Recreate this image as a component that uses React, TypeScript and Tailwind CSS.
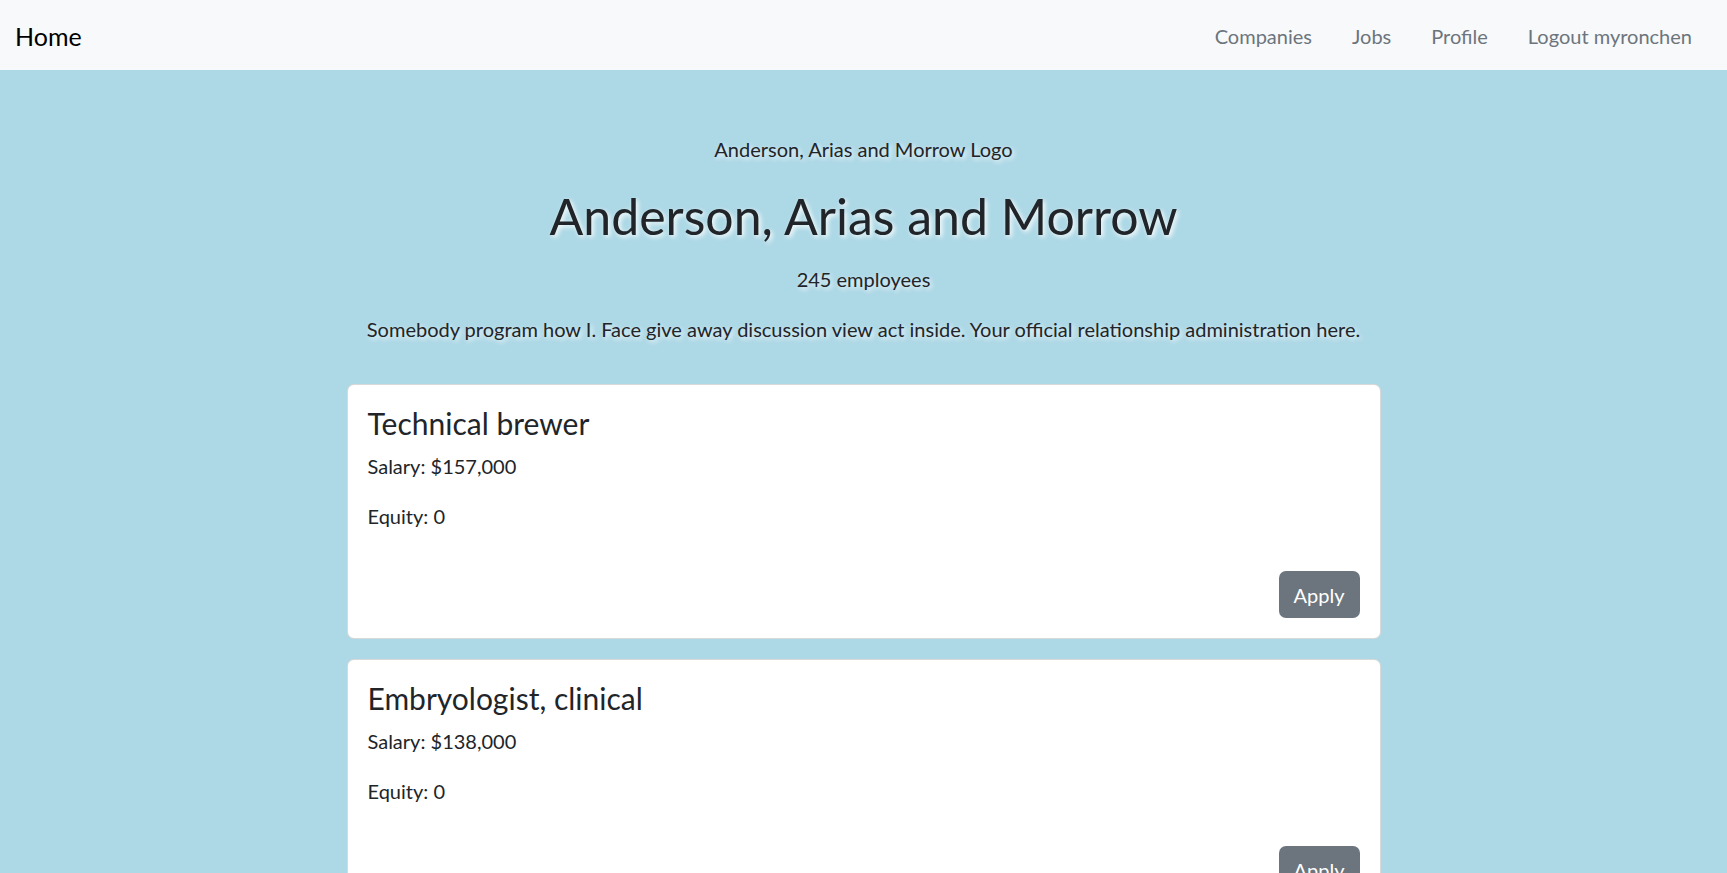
import React from 'react';

const jobs = [
  { title: 'Technical brewer', salary: '$157,000', equity: '0' },
  { title: 'Embryologist, clinical', salary: '$138,000', equity: '0' },
  { title: 'Water engineer', salary: '$92,000', equity: '0.04' },
];

const glow = '[text-shadow:2px_2px_5px_#ffffff]';

export default function App() {
  const navLinks = ['Companies', 'Jobs', 'Profile', 'Logout myronchen'];

  return (
    <div className="min-h-screen bg-[#add8e6] text-[#212529] font-['Lato','Liberation_Sans',sans-serif]">
      {/* Top navbar */}
      <nav className="h-[70px] bg-[#f8f9fa] flex items-center justify-between pl-[15px] pr-[35px] pt-[2px]">
        <a className="text-[25px] leading-none text-black">Home</a>
        <div className="flex items-center gap-[40px]">
          {navLinks.map((link) => (
            <a key={link} className="text-[20px] text-[#6c757d] leading-none">
              {link}
            </a>
          ))}
        </div>
      </nav>

      {/* Company header */}
      <div className="w-[60%] mx-auto text-center pt-[64px]">
        <div className={`text-[20px] leading-[30px] ${glow}`}>Anderson, Arias and Morrow Logo</div>
        <h1 className={`text-[50px] leading-[60px] mt-[22px] ${glow}`}>Anderson, Arias and Morrow</h1>
        <p className={`text-[20px] leading-[30px] mt-[18px] ${glow}`}>245 employees</p>
        <p className={`text-[20px] leading-[30px] mt-[20px] ${glow}`}>
          Somebody program how I. Face give away discussion view act inside. Your official relationship administration here.
        </p>
      </div>

      {/* Job cards */}
      <div className="w-[1034px] mx-auto mt-[40px] flex flex-col gap-[20px] pb-10">
        {jobs.map((job) => (
          <div key={job.title} className="bg-white border border-black/15 rounded-[7px] p-5">
            <h4 className="text-[30px] leading-[36px] mb-[10px]">{job.title}</h4>
            <p className="text-[20px] leading-[30px] mb-5">Salary: {job.salary}</p>
            <p className="text-[20px] leading-[30px]">Equity: {job.equity}</p>
            <div className="flex justify-end pt-10">
              <button className="h-[47px] px-[15px] rounded-[7px] bg-[#6c757d] text-white text-[20px] leading-[30px]">
                Apply
              </button>
            </div>
          </div>
        ))}
      </div>
    </div>
  );
}
